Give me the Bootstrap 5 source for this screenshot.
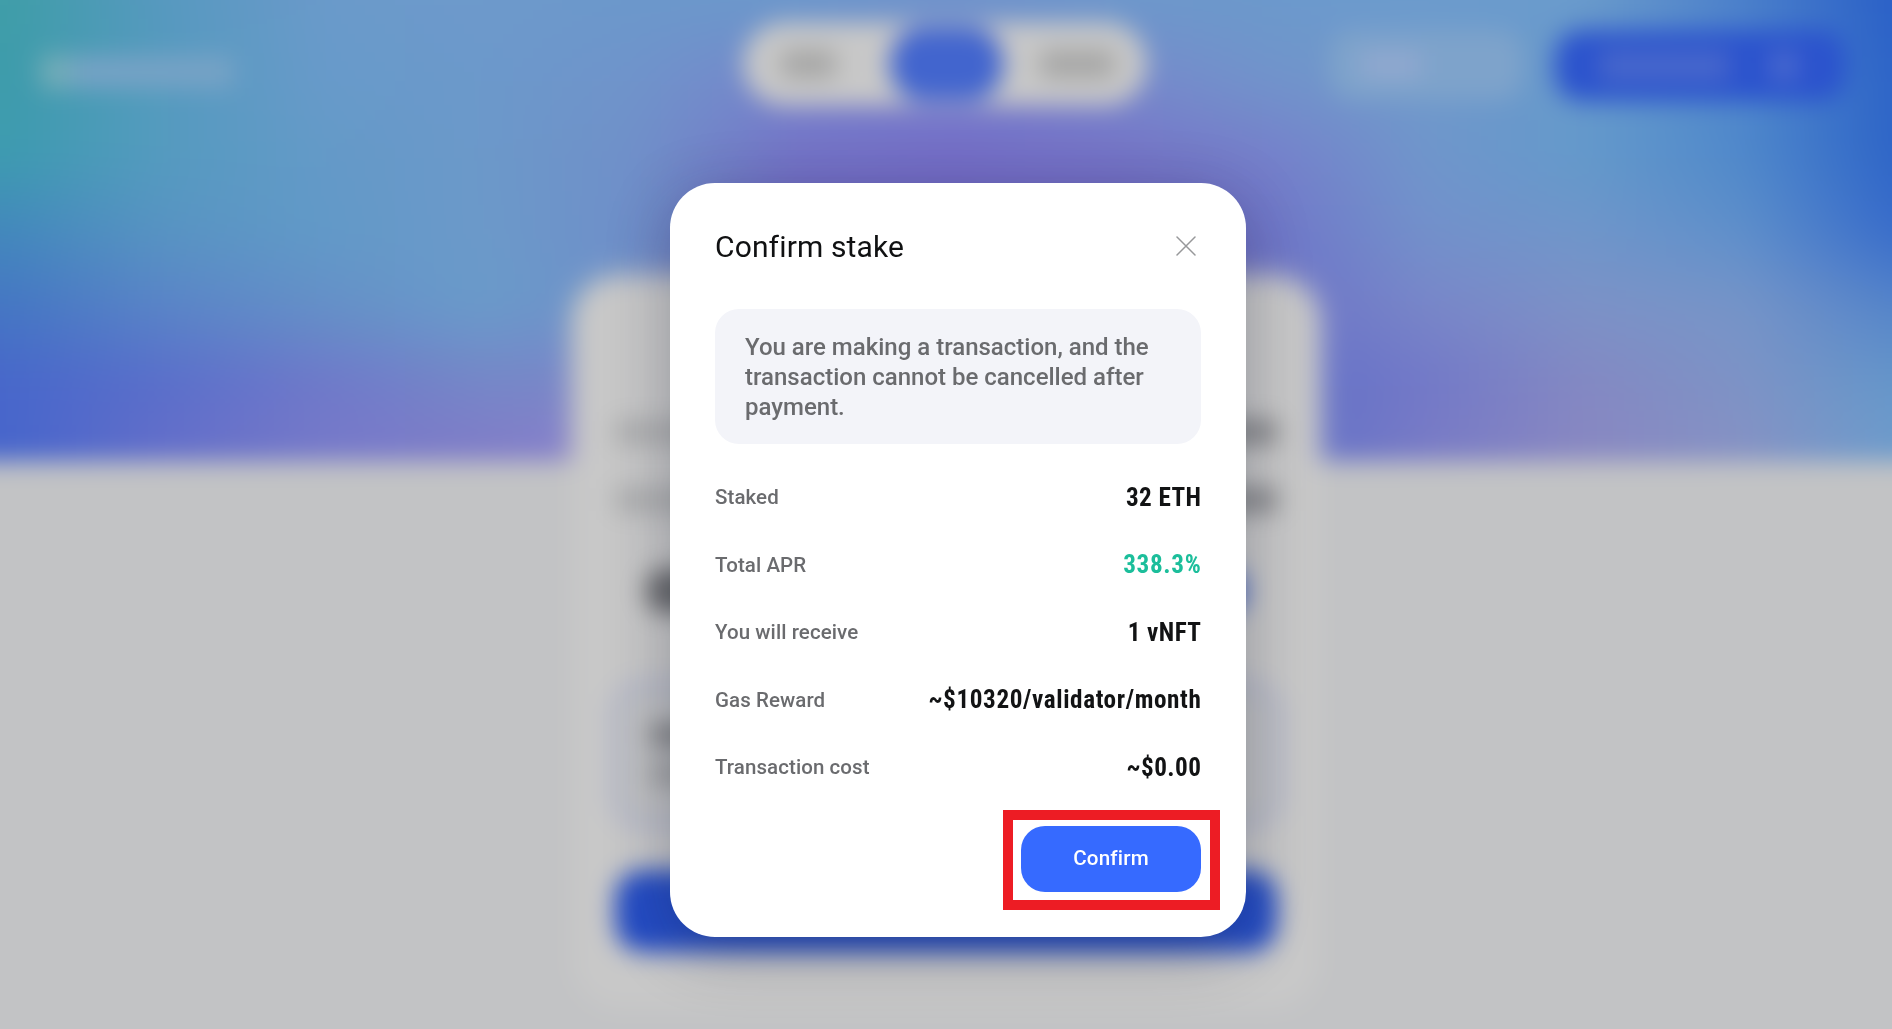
<!DOCTYPE html>
<html lang="en">
<head>
<meta charset="utf-8">
<meta name="viewport" content="width=device-width, initial-scale=1">
<title>Confirm stake</title>
<link href="https://cdn.jsdelivr.net/npm/bootstrap@5.3.0/dist/css/bootstrap.min.css" rel="stylesheet">
<style>
  body{background:#c2c3c5;font-family:Roboto,"Liberation Sans",sans-serif;color:#121314}
  .stage{height:1029px}
  /* page behind the dialog, seen out of focus */
  .scene{position:absolute;inset:-60px;padding:60px;background:#c2c3c5;filter:blur(12px)}
  .hero{position:absolute;top:0;left:0;right:0;height:521px;overflow:hidden}
  .hero canvas{position:absolute;left:-176.5px;top:-54px;width:2365px;height:610.4px;filter:blur(18px)}
  .topbar{position:relative;height:130px;padding:30px 47px 0 40px}
  .logo-dot{width:32px;height:34px;background:#74adb8;border-radius:6px}
  .logo-bar{width:162px;height:32px;background:#77a3c6}
  .tabs-pill{left:743px;width:404px;height:84px;margin-top:-8px;border-radius:42px;background:#c8c8c8;padding:0 32px 0 38px}
  .tab-text{height:28px;background:#a5a5a4;border-radius:6px}
  .tab-on{width:114px;height:74px;margin:0 37px 0 54px;border-radius:34px;background:#4265ce}
  .net-pill{width:194px;height:70px;border-radius:24px;background:#7ea3cb}
  .net-text{width:60px;height:24px;background:#93a9d0}
  .wallet-pill{width:290px;height:71px;border-radius:26px;background:#2b53cd;padding:0 48px 0 44px}
  .wallet-text{width:130px;height:30px;background:#4868cc}
  .wallet-dot{width:26px;height:28px;background:#4c6ccf}
  .stake-card{position:relative;width:744px;height:730px;margin:147px auto 0;border-radius:45px;background:#c8c8c8;padding:143px 37px 0;box-shadow:0 0 24px rgba(200,200,200,.8)}
  .row-bar{height:24px;margin-bottom:44px;padding:0 4px}
  .bar-l{width:120px;background:#acadae}
  .bar-r{width:82px;background:#858689}
  .amount{height:44px;margin:57px 35px 0}
  .amount i{width:70px;background:#68696c;border-radius:18px}
  .amount b{width:88px;background:#4a69c8;border-radius:18px}
  .field-box{height:150px;margin:67px -1px 0;border:9px solid #b0b4ca;border-radius:34px;background:#c0c1c3;padding:36px 32px}
  .field-box i{width:150px;height:22px;background:#77787b}
  .field-box b{width:150px;height:24px;background:#9a9b9d;margin-top:18px}
  .stake-btn{height:82px;margin:40px 4px 0;border-radius:28px;background:#244cc4}

  .dialog-wrap{position:absolute;inset:0;padding-top:183px}
  .stake-dialog{width:576px;height:754px;margin-left:670px;border-radius:45px;background:#fff;padding:45px 45px 0;box-shadow:0 14px 64px rgba(20,22,45,.3)}
  .dialog-title{font-size:30px;line-height:38px;letter-spacing:.14px;font-weight:400;color:#101112}
  .close-x{margin-top:-2px}
  .notice{margin-top:43px;height:135px;border-radius:24px;background:#f3f4f9;padding:23px 20px 0 30px;font-size:24px;line-height:30.1px;color:#6a6b6e;font-weight:500}
  .facts{margin-top:20px}
  .facts>div{height:67.5px}
  .facts dt{font-size:20.5px;letter-spacing:.08px;font-weight:500;color:#6a6b6e}
  .facts dd{font-size:25.2px;font-stretch:75%;font-weight:700;letter-spacing:.42px;margin:0 -.4px 0 0}
  .facts .long-value{letter-spacing:.6px}
  .facts .apr{color:#1cbe9b;letter-spacing:.65px}
  .confirm-btn{width:180px;height:66px;margin-top:24px;border:0;border-radius:24px;background:#366aff;color:#fff;font-size:20.6px;font-weight:500;letter-spacing:.2px}
  .confirm-btn:hover{background:#366aff;color:#fff}
  .marker{position:absolute;left:1003px;top:810px;width:217px;height:100px;border:10px solid #ed1c24}
</style>
<script src="https://cdn.jsdelivr.net/npm/bootstrap@5.3.0/dist/js/bootstrap.bundle.min.js"></script>
</head>
<body class="m-0">
<main class="stage position-relative overflow-hidden">
<div class="scene" aria-hidden="true">
  <div class="hero"><canvas id="mesh" width="15" height="8"></canvas></div>
  <header class="topbar d-flex">
    <div class="d-flex align-items-center mt-3" style="height:52px"><div class="logo-dot"></div><div class="logo-bar"></div></div>
    <div class="tabs-pill d-flex align-items-center position-absolute">
      <div class="tab-text" style="width:56px"></div><div class="tab-on"></div><div class="tab-text" style="width:76px"></div>
    </div>
    <div class="d-flex ms-auto">
      <div class="net-pill d-flex align-items-center ps-4 me-4"><div class="net-text ms-2"></div></div>
      <div class="wallet-pill d-flex align-items-center justify-content-between ms-2"><div class="wallet-text"></div><div class="wallet-dot"></div></div>
    </div>
  </header>
  <section class="stake-card">
    <div class="d-flex justify-content-between row-bar"><div class="bar-l"></div><div class="bar-r"></div></div>
    <div class="d-flex justify-content-between row-bar"><div class="bar-l"></div><div class="bar-r"></div></div>
    <div class="d-flex justify-content-between amount"><i></i><b></b></div>
    <div class="d-flex flex-column field-box"><i></i><b></b></div>
    <div class="stake-btn"></div>
  </section>
</div>

<div class="dialog-wrap">
  <section class="stake-dialog" role="dialog" aria-labelledby="dlgTitle">
    <div class="d-flex justify-content-between align-items-center">
      <h1 id="dlgTitle" class="dialog-title m-0">Confirm stake</h1>
      <svg class="close-x me-1" width="22" height="22" viewBox="0 0 22 22" fill="none" stroke="#97989a" stroke-width="1.5" stroke-linecap="round" role="img" aria-label="Close"><path d="M2 2l18 18M20 2L2 20"/></svg>
    </div>
    <div class="notice">You are making a transaction, and the<br>transaction cannot be cancelled after<br>payment.</div>
    <dl class="facts mb-0">
      <div class="d-flex justify-content-between align-items-center"><dt>Staked</dt><dd>32 ETH</dd></div>
      <div class="d-flex justify-content-between align-items-center"><dt>Total APR</dt><dd class="apr">338.3%</dd></div>
      <div class="d-flex justify-content-between align-items-center"><dt>You will receive</dt><dd>1 vNFT</dd></div>
      <div class="d-flex justify-content-between align-items-center"><dt>Gas Reward</dt><dd class="long-value">~$10320/validator/month</dd></div>
      <div class="d-flex justify-content-between align-items-center"><dt>Transaction cost</dt><dd>~$0.00</dd></div>
    </dl>
    <div class="d-flex justify-content-end"><button class="btn confirm-btn" type="button">Confirm</button></div>
  </section>
</div>
<div class="marker"></div>
</main>

<script>
  // colour mesh of the hero: 13 columns x 7 rows, interpolated by the canvas upscale
  const cols = [
    '3f9ea8 3d9cab 3d9cb0 4388bd 4576c4 4867cb 4766cc',
    '5799c0 569bbf 559bc0 5894c3 5a84c8 5a6ecb 666fca',
    '6a9aca 689bca 649ac8 629ac8 6590c8 6f78ca 787ac9',
    '6e9acc 6c99cb 6c99ca 6c9aca 6a9bca 7686c8 827cc9',
    '6c98cb 7094cb 7090c9 6f8fc9 6f90ca 7c86ca 8e84ca',
    '6c98cb 7785cc 7574c8 7068c4 7068c4 7880c8 9888c8',
    '7094cc 7480cc 766ec8 7068c4 7068c4 7068c8 7068c8',
    '6e98cb 7888cc 7674c8 7068c4 7068c4 7068c8 7068c8',
    '6c99cc 7294cb 7680cb 7076c9 6b72c8 6070c8 6070c8',
    '6d9ccd 709acc 7096cc 7391cb 7986c9 7278c8 7a7cc6',
    '6a9bcc 6799cb 649acb 7096ca 7d92c7 8488c3 8a88c2',
    '4c80cb 5088cc 5089cb 5f90cb 7795c8 7e93c6 8892c4',
    '2a60c8 2d64c8 2e65c8 386ccb 5585ca 6597ca 6f9dcc'
  ].map(c => c.split(' '));
  const g = document.getElementById('mesh').getContext('2d');
  for (let x = 0; x < 15; x++) for (let y = 0; y < 8; y++) {
    const c = cols[Math.min(12, Math.max(0, x - 1))];
    g.fillStyle = '#' + c[Math.max(0, y - 1)];
    g.fillRect(x, y, 1, 1);
  }
</script>
</body>
</html>
